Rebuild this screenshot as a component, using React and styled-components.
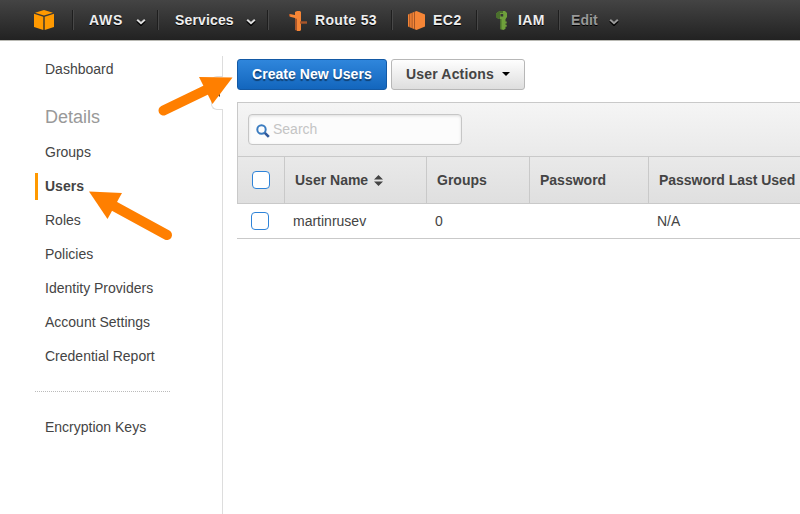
import React from "react";
import styled, { createGlobalStyle, css } from "styled-components";

const GlobalStyle = createGlobalStyle`
  * { box-sizing: border-box; }
  html, body { margin: 0; height: 100%; overflow: hidden; background: #fff; }
  body { font: 14px/20px "Liberation Sans", Arial, sans-serif; color: #444; }
`;

const Page = styled.div`
  position: relative;
  width: 800px;
  height: 514px;
  overflow: hidden;
  display: flex;
  flex-direction: column;
`;

const TopBar = styled.nav`
  height: 41px;
  flex: none;
  display: flex;
  align-items: flex-start;
  background: linear-gradient(#444 0, #222 40px);
  border-bottom: 1px solid #b9b9b3;
`;

const NavItem = styled.div`
  width: ${(p) => p.$width}px;
  height: 20px;
  margin-top: 10px;
  padding-left: ${(p) => p.$pad}px;
  display: flex;
  align-items: center;
  white-space: nowrap;
  font-weight: bold;
  letter-spacing: ${(p) => p.$spacing || 0}px;
  color: ${(p) => (p.$muted ? "#999" : "#eee")};
  text-shadow: 0 1px 0 #000;
  ${(p) =>
    p.$divided &&
    css`
      border-left: 1px solid #1e1e1e;
      box-shadow: inset 1px 0 0 #484848;
    `}
  svg { flex: none; }
`;

const NavLabel = styled.span`
  width: ${(p) => p.$width}px;
  margin-left: ${(p) => p.$gap || 0}px;
`;

const ChevronIcon = styled.svg`
  margin-top: 3px;
`;

const Body = styled.div`
  flex: 1;
  display: flex;
`;

const Sidebar = styled.aside`
  position: relative;
  width: 223px;
  flex: none;
  margin-top: 15px;
  padding: 0 52px 0 35px;
  border-right: 1px solid #ddd;
`;

const SideLink = styled.div`
  height: 27px;
  margin-bottom: 7px;
  padding-left: ${(p) => (p.$active ? 7 : 10)}px;
  border-left: ${(p) => (p.$active ? "3px solid #f90" : "0")};
  font-weight: ${(p) => (p.$active ? "bold" : "normal")};
  line-height: 27px;
  white-space: nowrap;
`;

const SideTitle = styled.div`
  margin: 21px 0 9px;
  padding-left: 10px;
  font-size: 18px;
  line-height: 26px;
  color: #999;
`;

const SideRule = styled.div`
  margin: 21px 0 22px;
  border-top: 1px dotted #bbb;
`;

const CollapseTab = styled.div`
  position: absolute;
  top: 20px;
  right: -1px;
  width: 12px;
  height: 34px;
  border: 1px solid #ddd;
  border-right: 0;
  border-radius: 6px 0 0 6px;
  background: #fff;
  display: flex;
  align-items: center;
  justify-content: flex-end;
  svg { margin-right: 3px; }
`;

const Main = styled.main`
  flex: 1;
  min-width: 0;
  padding: 18px 0 0 14px;
`;

const Actions = styled.div`
  display: flex;
  gap: 4px;
  margin-bottom: 12px;
`;

const Button = styled.button`
  width: ${(p) => p.$width}px;
  height: 31px;
  padding: 0 0 1px 14px;
  display: flex;
  align-items: center;
  gap: 8px;
  border: 1px solid #b7b7b7;
  border-radius: 3px;
  background: linear-gradient(#fefefe, #dedede);
  color: #444;
  font: bold 14px/20px "Liberation Sans", Arial, sans-serif;
  letter-spacing: 0.17px;
  white-space: nowrap;
  ${(p) =>
    p.$primary &&
    css`
      border-color: #1359a5;
      background: linear-gradient(#2f86dc, #1366bd);
      color: #fff;
      letter-spacing: 0.04px;
      text-shadow: 0 2px 1px rgba(0, 0, 0, 0.45);
    `}
`;

const Panel = styled.section`
  border: 1px solid #c9c9c9;
  border-width: 1px 0 0 1px;
  background: linear-gradient(#f5f5f5, #dfdfdf);
`;

const SearchRow = styled.div`
  height: 53px;
  padding: 11px 0 0 10px;
`;

const SearchBox = styled.label`
  width: 214px;
  height: 31px;
  padding: 0 0 2px 7px;
  display: flex;
  align-items: center;
  gap: 3px;
  border: 1px solid #c6c6c6;
  border-radius: 4px;
  background: #fcfcfc;
  box-shadow: inset 0 1px 3px rgba(0, 0, 0, 0.12);
  color: #c4c4c4;
  svg { margin-top: 4px; }
`;

const columns = "47px 142px 103px 119px 1fr";

const HeaderRow = styled.div`
  display: grid;
  grid-template-columns: ${columns};
  height: 48px;
  border-top: 1px solid #c9c9c9;
  border-bottom: 1px solid #c9c9c9;
`;

const HeaderCell = styled.div`
  display: flex;
  align-items: center;
  gap: 6px;
  padding: 0 0 0 ${(p) => (p.$check ? 14 : 10)}px;
  border-right: 1px solid #c9c9c9;
  font-weight: bold;
  white-space: nowrap;
  &:last-child { border-right: 0; letter-spacing: -0.04px; }
`;

const DataRow = styled.div`
  display: grid;
  grid-template-columns: ${columns};
  height: 35px;
  border-bottom: 1px solid #c9c9c9;
`;

const DataCell = styled.div`
  display: flex;
  align-items: center;
  padding-left: ${(p) => (p.$check ? 14 : 9)}px;
`;

const Checkbox = styled.span`
  width: 18px;
  height: 18px;
  border: 1px solid #2e83d8;
  border-radius: 4px;
  background: #fff;
`;

const ArrowLayer = styled.svg`
  position: absolute;
  left: 0;
  top: 0;
  pointer-events: none;
`;

const Chevron = ({ color }) => (
  <ChevronIcon width="10" height="8" viewBox="0 0 10 8">
    <path d="M1 3l4 4 4-4" fill="none" stroke="#000" strokeWidth="2" />
    <path d="M1.200 1.700L5 5.200l3.800-3.500" fill="none" stroke={color} strokeWidth="2" />
  </ChevronIcon>
);

const Logo = () => (
  <svg width="20" height="20" viewBox="0 0 20 20" fill="#ff9900">
    <path d="M10 0l9 2.700L10 5.500 1 2.700z" />
    <path d="M0 3.800l9.300 2.900V20L0 17z" />
    <path d="M20 3.800l-9.300 2.900V20L20 17z" />
  </svg>
);

const RouteIcon = () => (
  <svg width="18" height="20" viewBox="0 0 18 20" overflow="visible">
    <path d="M6 2l2.500-1v20L6 20z" fill="#a9562a" />
    <path d="M8 1h3l1 1v18l-1 1H8z" fill="#f58536" />
    <path d="M1 4l6 1.200v3L1 6.700z" fill="#f58536" />
    <path d="M0 4h1.200v2.700L0 6.200z" fill="#a9562a" />
    <path d="M6 2l2.500-1v8L6 8.300z" fill="#f58536" />
    <path d="M11 11.300h7v2.400h-7z" fill="#a9562a" />
  </svg>
);

const ServerIcon = () => (
  <svg width="17" height="19" viewBox="0 0 17 19">
    <path d="M0 3.500L8.500 0 17 3.500v12L8.500 19 0 15.500z" fill="#f58536" />
    <path d="M1.700 3v13M4.100 2v15M6.500 1v17" stroke="#9d5025" strokeWidth=".9" />
  </svg>
);

const KeyIcon = () => (
  <svg width="12" height="20" viewBox="0 0 12 20" overflow="visible">
    <path fillRule="evenodd" d="M3.500 1H9l2 2v4L9.500 9H2.500L0 7V3.500zM4.500 4v2.500h2.700V4z" fill="#6fa03b" />
    <path d="M3.500 1L0 3.500V7l2.500 2H4V3h3V1z" fill="#4b702d" />
    <path d="M4 8h5.500v3.500h1.200v2H9.500v1.200h1.200v2H9.500v2L7.500 20 4 19z" fill="#6fa03b" />
    <path d="M4 9h1.500v10.400L4 19z" fill="#4b702d" />
  </svg>
);

const Magnifier = () => (
  <svg width="14" height="14" viewBox="0 0 14 14" fill="none">
    <circle cx="5.500" cy="5.500" r="4.200" stroke="#3b7cc0" strokeWidth="2" />
    <path d="M8.800 8.800l4 4" stroke="#30599b" strokeWidth="2.600" />
  </svg>
);

const SortIcon = () => (
  <svg width="9" height="11" viewBox="0 0 9 11" fill="#444">
    <path d="M4.500 0L9 4.500H0zM4.500 11L9 6.500H0z" />
  </svg>
);

const links = ["Roles", "Policies", "Identity Providers", "Account Settings", "Credential Report"];

export default function App() {
  return (
    <Page>
      <GlobalStyle />
      <TopBar>
        <NavItem $width={72} $pad={34}><Logo /></NavItem>
        <NavItem $divided $width={85} $pad={16} $spacing={0.7}>
          <NavLabel $width={47}>AWS</NavLabel><Chevron color="#ddd" />
        </NavItem>
        <NavItem $divided $width={110} $pad={17} $spacing={0.15}>
          <NavLabel $width={71}>Services</NavLabel><Chevron color="#ddd" />
        </NavItem>
        <NavItem $divided $width={124} $pad={21} $spacing={0.35}>
          <RouteIcon /><NavLabel $gap={8}>Route 53</NavLabel>
        </NavItem>
        <NavItem $divided $width={85} $pad={16} $spacing={0.5}>
          <ServerIcon /><NavLabel $gap={8}>EC2</NavLabel>
        </NavItem>
        <NavItem $divided $width={82} $pad={19} $spacing={0.4}>
          <KeyIcon /><NavLabel $gap={10}>IAM</NavLabel>
        </NavItem>
        <NavItem $divided $muted $width={100} $pad={12} $spacing={0.1}>
          <NavLabel $width={38}>Edit</NavLabel><Chevron color="#999" />
        </NavItem>
      </TopBar>
      <Body>
        <Sidebar>
          <SideLink>Dashboard</SideLink>
          <SideTitle>Details</SideTitle>
          <SideLink>Groups</SideLink>
          <SideLink $active>Users</SideLink>
          {links.map((name) => <SideLink key={name}>{name}</SideLink>)}
          <SideRule />
          <SideLink>Encryption Keys</SideLink>
          <CollapseTab>
            <svg width="5" height="8" viewBox="0 0 5 8"><path d="M5 0v8L0 4z" fill="#444" /></svg>
          </CollapseTab>
        </Sidebar>
        <Main>
          <Actions>
            <Button $primary $width={150}>Create New Users</Button>
            <Button $width={134}>
              User Actions
              <svg width="8" height="4" viewBox="0 0 8 4"><path d="M0 0h8L4 4z" /></svg>
            </Button>
          </Actions>
          <Panel>
            <SearchRow>
              <SearchBox><Magnifier />Search</SearchBox>
            </SearchRow>
            <HeaderRow>
              <HeaderCell $check><Checkbox /></HeaderCell>
              <HeaderCell>User Name <SortIcon /></HeaderCell>
              <HeaderCell>Groups</HeaderCell>
              <HeaderCell>Password</HeaderCell>
              <HeaderCell>Password Last Used</HeaderCell>
            </HeaderRow>
          </Panel>
          <DataRow>
            <DataCell $check><Checkbox /></DataCell>
            <DataCell>martinrusev</DataCell>
            <DataCell>0</DataCell>
            <DataCell />
            <DataCell>N/A</DataCell>
          </DataRow>
        </Main>
      </Body>
      <ArrowLayer width="800" height="514" viewBox="0 0 800 514">
        <g fill="#ff7f00" stroke="#ff7f00">
          <path d="M163.500 110.500L206 90" strokeWidth="10" strokeLinecap="round" />
          <path d="M232.500 77.500L199 77l13.500 27z" stroke="none" />
          <path d="M167 235L112 205" strokeWidth="10" strokeLinecap="round" />
          <path d="M89 191.500L122 193l-14.500 26z" stroke="none" />
        </g>
      </ArrowLayer>
    </Page>
  );
}
